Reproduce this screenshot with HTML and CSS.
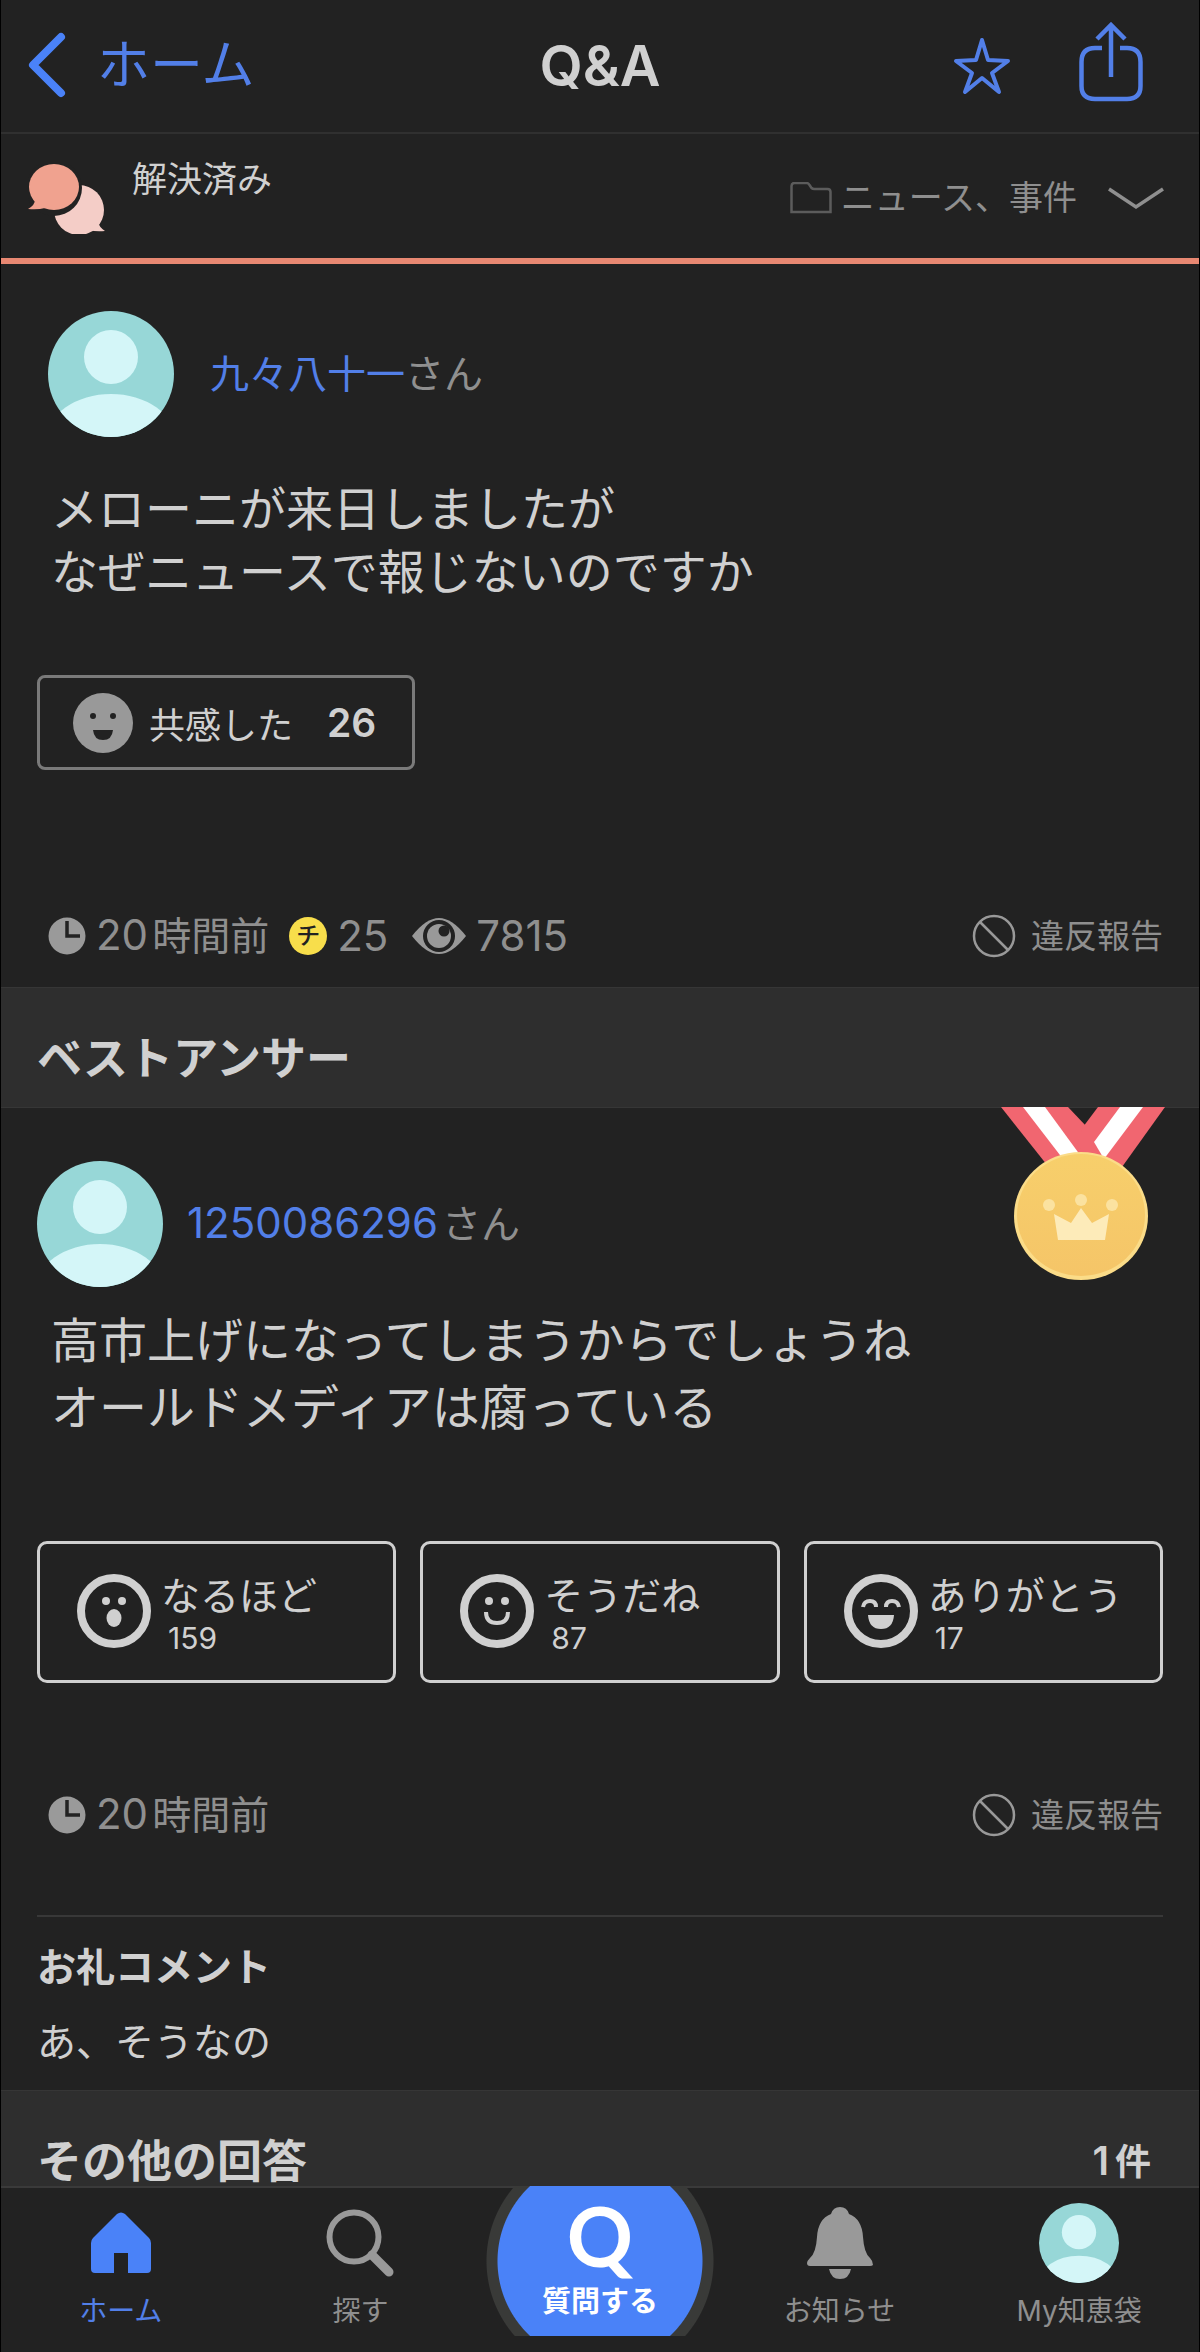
FILE: index.html
```html
<!DOCTYPE html>
<html lang="ja">
<head>
<meta charset="utf-8">
<meta name="viewport" content="width=device-width, initial-scale=1">
<title>Q&amp;A</title>
<link rel="stylesheet" href="styles.css">
</head>
<body>
<svg class="defs" aria-hidden="true">
  <symbol id="avatar" viewBox="0 0 126 126">
    <clipPath id="avatar-clip"><circle cx="63" cy="63" r="63"/></clipPath>
    <g clip-path="url(#avatar-clip)">
      <rect width="126" height="126" fill="#97d7d7"/>
      <circle cx="63" cy="46" r="27" fill="#d4f6f8"/>
      <ellipse cx="63" cy="128" rx="64" ry="45" fill="#d4f6f8"/>
    </g>
  </symbol>
  <symbol id="clock" viewBox="0 0 38 38">
    <circle cx="19" cy="19" r="18.500" fill="#9a9a9a"/>
    <path d="M19 4v15h13" fill="none" stroke="#222" stroke-width="3.500"/>
  </symbol>
  <symbol id="ban" viewBox="0 0 44 44">
    <circle cx="22" cy="22" r="20" fill="none" stroke="#999" stroke-width="2.500"/>
    <path d="M8 8l28 28" stroke="#999" stroke-width="2.500"/>
  </symbol>
</svg>
<div class="app">
  <header class="nav">
    <a class="nav__back" href="#">
      <svg width="40" height="66" viewBox="0 0 40 66" aria-hidden="true"><path d="M34 5L6 33l28 28" fill="none" stroke="#4a82f8" stroke-width="8" stroke-linecap="round" stroke-linejoin="round"/></svg>
      <span>ホーム</span>
    </a>
    <h1 class="nav__title">Q&amp;A</h1>
    <div class="nav__actions">
      <button class="icon-button" type="button" aria-label="お気に入り">
        <svg width="58" height="58" viewBox="0 0 58 58"><path d="M29 3l6 20 20 1-16 12 7 19-17-14-17 14 7-19L3 24l20-1z" fill="none" stroke="#527fe8" stroke-width="4" stroke-linejoin="round"/></svg>
      </button>
      <button class="icon-button" type="button" aria-label="共有">
        <svg width="64" height="82" viewBox="0 0 64 82"><path d="M23 26H16Q2.500 26 2.500 40v24Q2.500 77 16 77h32q13.500 0 13.500-13V40Q61.500 26 48 26h-7M32 55V4M18 17L32 3l14 14" fill="none" stroke="#527fe8" stroke-width="4.500"/></svg>
      </button>
    </div>
  </header>

  <div class="status">
    <div class="status__state">
      <svg class="status__icon" width="78" height="70" viewBox="0 0 78 70" aria-hidden="true">
        <circle cx="51" cy="46" r="25" fill="#f4cdc7"/>
        <path d="M70 58q1 5 7 9-9 1-16-1z" fill="#f4cdc7"/>
        <circle cx="26" cy="24" r="28" fill="#222"/>
        <ellipse cx="26" cy="23" rx="25" ry="23" fill="#f0a28f"/>
        <path d="M7 36q0 5-7 9 10 1 17-1z" fill="#f0a28f"/>
      </svg>
      <span>解決済み</span>
    </div>
    <button class="status__category" type="button">
      <svg class="status__folder" width="42" height="32" viewBox="0 0 42 32" aria-hidden="true"><path d="M1.500 30V4q0-3 3-3h12q2 0 3 2l2 3q1 1 3 1h13q3 0 3 3v20z" fill="none" stroke="#5c5c5c" stroke-width="2.500"/></svg>
      <span>ニュース、事件</span>
      <svg class="status__chevron" width="56" height="24" viewBox="0 0 56 24" aria-hidden="true"><path d="M1 3l27 18L55 3" fill="none" stroke="#8f8f8f" stroke-width="3.500"/></svg>
    </button>
  </div>

  <main>
    <article class="question">
      <div class="author author--inset">
        <svg class="author__avatar" width="126" height="126" aria-hidden="true"><use href="#avatar"/></svg>
        <p class="author__name"><a href="#">九々八十一</a>さん</p>
      </div>
      <p class="post post--question">メローニが来日しましたが<br>なぜニュースで報じないのですか</p>
      <button class="empathy" type="button">
        <svg width="60" height="60" viewBox="0 0 60 60" aria-hidden="true"><circle cx="30" cy="30" r="30" fill="#999"/><circle cx="20" cy="23" r="3" fill="#222"/><circle cx="40" cy="23" r="3" fill="#222"/><path d="M20 37h20q-1 10-10 10t-10-10z" fill="#222"/></svg>
        <span>共感した</span>
        <strong class="empathy__count">26</strong>
      </button>
      <div class="meta">
        <span class="meta__item"><svg width="38" height="38" aria-hidden="true"><use href="#clock"/></svg><span class="meta__text"><span class="num">20</span>時間前</span></span>
        <span class="meta__item"><span class="coin">チ</span><span class="num">25</span></span>
        <span class="meta__item"><svg width="54" height="38" viewBox="0 0 54 38" aria-hidden="true"><path d="M0 19Q14 1 27 1t27 18Q40 37 27 37T0 19z" fill="#999"/><circle cx="27" cy="19" r="16" fill="#222"/><circle cx="27" cy="19" r="12" fill="#999"/><circle cx="32" cy="14" r="5.500" fill="#222"/></svg><span class="num">7815</span></span>
        <button class="report" type="button"><svg width="44" height="44" aria-hidden="true"><use href="#ban"/></svg>違反報告</button>
      </div>
    </article>

    <h2 class="bar">ベストアンサー</h2>

    <article class="answer">
      <svg class="answer__medal" width="164" height="174" viewBox="0 0 164 174" aria-hidden="true">
        <linearGradient id="gold" x1="0" y1="0" x2="0" y2="1"><stop offset="0" stop-color="#f7cf6b"/><stop offset="1" stop-color="#f5c568"/></linearGradient>
        <path d="M0 0h67l55 58H46z" fill="#f16670"/>
        <path d="M22 0h22l38 52H62z" fill="#fff"/>
        <path d="M97 0h67l-43 60-46-20 7-20z" fill="#f16670"/>
        <path d="M119 0h23l-39 52-10-17z" fill="#fff"/>
        <ellipse cx="80" cy="109" rx="67" ry="64" fill="#fbdc88"/>
        <ellipse cx="80" cy="108" rx="64" ry="61" fill="url(#gold)"/>
        <path d="M53 107l17 9 10-15 11 15 17-9-4 26H57z" fill="#fdebb9"/>
        <circle cx="48" cy="98" r="6" fill="#fbe2a0"/><circle cx="80" cy="93" r="6" fill="#fbe2a0"/><circle cx="111" cy="98" r="6" fill="#fbe2a0"/>
      </svg>
      <div class="author">
        <svg class="author__avatar" width="126" height="126" aria-hidden="true"><use href="#avatar"/></svg>
        <p class="author__name"><a class="num" href="#">1250086296</a>さん</p>
      </div>
      <p class="post post--answer">高市上げになってしまうからでしょうね<br>オールドメディアは腐っている</p>
      <div class="reactions">
        <button class="reaction" type="button">
          <svg width="74" height="74" viewBox="0 0 74 74" aria-hidden="true"><circle cx="37" cy="37" r="33" fill="none" stroke="#d0d0d0" stroke-width="8"/><circle cx="29" cy="27" r="4" fill="#d0d0d0"/><circle cx="45" cy="27" r="4" fill="#d0d0d0"/><ellipse cx="37" cy="44" rx="7.500" ry="9" fill="#d0d0d0"/></svg>
          <span class="reaction__text"><span class="reaction__label">なるほど</span><span class="reaction__count">159</span></span>
        </button>
        <button class="reaction" type="button">
          <svg width="74" height="74" viewBox="0 0 74 74" aria-hidden="true"><circle cx="37" cy="37" r="33" fill="none" stroke="#d0d0d0" stroke-width="8"/><circle cx="29" cy="27" r="4" fill="#d0d0d0"/><circle cx="45" cy="27" r="4" fill="#d0d0d0"/><path d="M26 38q0 11 11 11t11-11" fill="none" stroke="#d0d0d0" stroke-width="4"/></svg>
          <span class="reaction__text"><span class="reaction__label">そうだね</span><span class="reaction__count">87</span></span>
        </button>
        <button class="reaction" type="button">
          <svg width="74" height="74" viewBox="0 0 74 74" aria-hidden="true"><circle cx="37" cy="37" r="33" fill="none" stroke="#d0d0d0" stroke-width="8"/><path d="M19 33q1-6 7-6t6 6M42 33q0-6 6-6t7 6" fill="none" stroke="#d0d0d0" stroke-width="4"/><path d="M24 41h26q-1 14-13 14T24 41z" fill="#d0d0d0"/></svg>
          <span class="reaction__text"><span class="reaction__label">ありがとう</span><span class="reaction__count">17</span></span>
        </button>
      </div>
      <div class="meta">
        <span class="meta__item"><svg width="38" height="38" aria-hidden="true"><use href="#clock"/></svg><span class="meta__text"><span class="num">20</span>時間前</span></span>
        <button class="report" type="button"><svg width="44" height="44" aria-hidden="true"><use href="#ban"/></svg>違反報告</button>
      </div>
      <section class="thanks">
        <h3 class="thanks__title">お礼コメント</h3>
        <p class="thanks__text">あ、そうなの</p>
      </section>
    </article>

    <h2 class="bar bar--last">その他の回答<span class="bar__count"><span class="bar__number">1</span>件</span></h2>
  </main>

  <nav class="tabs">
    <a class="tab tab--active" href="#">
      <span class="tab__icon"><svg width="60" height="62" viewBox="0 0 60 62" aria-hidden="true"><path d="M26 2q4-3 8 0l24 24q2 2 2 5v26q0 4-4 4H37V41H23v20H4q-4 0-4-4V31q0-3 2-5z" fill="#4a82f8"/></svg></span>
      <span class="tab__label">ホーム</span>
    </a>
    <a class="tab" href="#">
      <span class="tab__icon"><svg width="68" height="68" viewBox="0 0 68 68" aria-hidden="true"><circle cx="28" cy="28" r="24.500" fill="none" stroke="#999" stroke-width="6"/><path d="M46 46l17 17" stroke="#999" stroke-width="9" stroke-linecap="round"/></svg></span>
      <span class="tab__label">探す</span>
    </a>
    <a class="tab-ask" href="#">
      <span class="tab-ask__mark">Q</span>
      <span class="tab-ask__label">質問する</span>
    </a>
    <a class="tab" href="#">
      <span class="tab__icon"><svg width="66" height="72" viewBox="0 0 66 72" aria-hidden="true"><path d="M33 0q7 0 9 7 13 5 14 23 1 16 7 21 3 3 3 7-1 1-3 1H3q-3 0-3-3 0-2 3-5 6-5 7-21 1-18 14-23 2-7 9-7zM22 62h22q-2 10-11 10T22 62z" fill="#999"/></svg></span>
      <span class="tab__label">お知らせ</span>
    </a>
    <a class="tab" href="#">
      <span class="tab__icon"><svg width="80" height="80" aria-hidden="true"><use href="#avatar"/></svg></span>
      <span class="tab__label">My知恵袋</span>
    </a>
  </nav>
</div>
</body>
</html>
```
FILE: styles.css
```css
* {
  box-sizing: border-box;
}

body {
  margin: 0;
  background: #222;
  color: #d0d0d0;
  font-family: Inter, "Noto Sans CJK JP", sans-serif;
}

h1, h2, h3, p {
  margin: 0;
}

a {
  color: #527fe8;
  text-decoration: none;
}

button {
  padding: 0;
  border: 0;
  background: none;
  color: inherit;
  font: inherit;
  cursor: pointer;
}

svg {
  display: block;
  flex: none;
}

.defs {
  position: absolute;
  width: 0;
  height: 0;
}

.app {
  border: solid #000;
  border-width: 0 1px;
}

/* Navigation bar */
.nav {
  display: grid;
  grid-template-columns: 1fr auto 1fr;
  align-items: center;
  height: 134px;
  border-bottom: 2px solid #303030;
}

.nav__back {
  display: flex;
  align-items: center;
  gap: 30px;
  padding: 0 0 2px 26px;
  font-size: 53px;
  line-height: 64px;
}

.nav__title {
  font-size: 56px;
  font-weight: 600;
  line-height: 64px;
}

.nav__actions {
  display: flex;
  align-items: center;
  justify-content: flex-end;
  gap: 68px;
  padding-right: 56px;
}

.icon-button:last-child {
  padding-bottom: 6px;
}

/* Status of the question */
.status {
  display: flex;
  justify-content: space-between;
  padding: 28px 35px 24px 27px;
  border-bottom: 6px solid #e88872;
}

.status__state {
  display: flex;
  gap: 26px;
  font-size: 35px;
  line-height: 34px;
}

.status__icon {
  align-self: flex-end;
  margin-top: 2px;
}

.status__category {
  display: flex;
  align-items: center;
  color: #8f8f8f;
  font-size: 34px;
  line-height: 40px;
}

.status__folder {
  margin-right: 9px;
}

.status__chevron {
  margin-left: 31px;
}

/* Posts */
.question {
  padding: 47px 36px 27px;
}

.answer {
  position: relative;
  padding: 53px 36px 24px;
}

.answer__medal {
  position: absolute;
  top: -1px;
  right: 34px;
}

.author {
  display: flex;
  align-items: center;
  gap: 24px;
}

.author--inset {
  gap: 36px;
  padding-left: 11px;
}

.author__name {
  color: #8f8f8f;
  font-size: 39px;
  line-height: 48px;
}

.num {
  margin-right: 4px;
  font-size: 42px;
  line-height: 40px;
}

.post {
  padding-left: 14px;
}

.post--question {
  margin: 40px 0 72px;
  font-size: 47px;
  line-height: 63px;
}

.post--answer {
  margin: 20px 0 100px;
  font-size: 48px;
  line-height: 67px;
}

.empathy {
  display: flex;
  align-items: center;
  gap: 16px;
  height: 95px;
  margin-bottom: 142px;
  padding: 0 36px 0 33px;
  border: 3px solid #7a7a7a;
  border-radius: 8px;
  font-size: 36px;
}

.empathy__count {
  padding-left: 18px;
  font-size: 39px;
  font-weight: 600;
}

.meta {
  display: flex;
  align-items: center;
  gap: 20px;
  padding-left: 11px;
  color: #8f8f8f;
  font-size: 39px;
  line-height: 48px;
}

.meta__item {
  display: flex;
  align-items: center;
  gap: 10px;
}

.coin {
  width: 38px;
  height: 38px;
  border-radius: 50%;
  background: #f8de4b;
  color: #222;
  font-size: 24px;
  font-weight: 500;
  line-height: 38px;
  text-align: center;
}

.report {
  display: flex;
  align-items: center;
  gap: 15px;
  margin-left: auto;
  font-size: 33px;
}

/* Section bars */
.bar {
  display: flex;
  justify-content: space-between;
  padding: 47px 48px 24px 36px;
  border: solid #363636;
  border-width: 1px 0;
  background: #2e2e2e;
  font-size: 45px;
  font-weight: 600;
  line-height: 48px;
}

.bar--last {
  padding-bottom: 0;
  border-bottom: 0;
}

.bar__count {
  font-size: 36px;
}

.bar__number {
  margin-right: 6px;
  font-size: 39px;
  line-height: 40px;
}

/* Reactions to an answer */
.reactions {
  display: grid;
  grid-template-columns: repeat(3, 1fr);
  gap: 24px;
  margin-bottom: 108px;
}

.reaction {
  display: flex;
  align-items: center;
  gap: 10px;
  height: 142px;
  padding: 0 0 2px 37px;
  border: 3px solid #d0d0d0;
  border-radius: 10px;
  text-align: left;
}

.reaction__text {
  padding-top: 6px;
}

.reaction__label,
.reaction__count {
  display: block;
}

.reaction__label {
  font-size: 39px;
  line-height: 48px;
}

.reaction__count {
  padding-left: 7px;
  font-size: 30px;
  line-height: 36px;
}

.thanks {
  margin-top: 76px;
  padding-top: 26px;
  border-top: 2px solid #383838;
  font-size: 39px;
  line-height: 48px;
}

.thanks__title {
  margin-bottom: 27px;
  font-size: inherit;
  font-weight: 600;
}

/* Tab bar */
.tabs {
  display: grid;
  grid-template-columns: repeat(5, 1fr);
  padding-bottom: 16px;
  border-top: 2px solid #3a3a3a;
}

.tab {
  display: flex;
  flex-direction: column;
  align-items: center;
  gap: 10px;
  padding-top: 15px;
  color: #8f8f8f;
  font-size: 28px;
  line-height: 36px;
}

.tab--active {
  color: #527fe8;
}

.tab__icon {
  display: flex;
  align-items: center;
  height: 80px;
}

.tab-ask {
  display: flex;
  flex-direction: column;
  align-items: center;
  height: 150px;
  margin-top: -2px;
  background: radial-gradient(circle, #4a82f8 102px, #393a38 103px 113px, transparent 114px);
  color: #fff;
  font-weight: 600;
}

.tab-ask__mark {
  font-family: Lato, Inter, sans-serif;
  font-size: 82px;
  font-weight: 700;
  line-height: 98px;
}

.tab-ask__label {
  font-size: 29px;
  line-height: 36px;
}
```
